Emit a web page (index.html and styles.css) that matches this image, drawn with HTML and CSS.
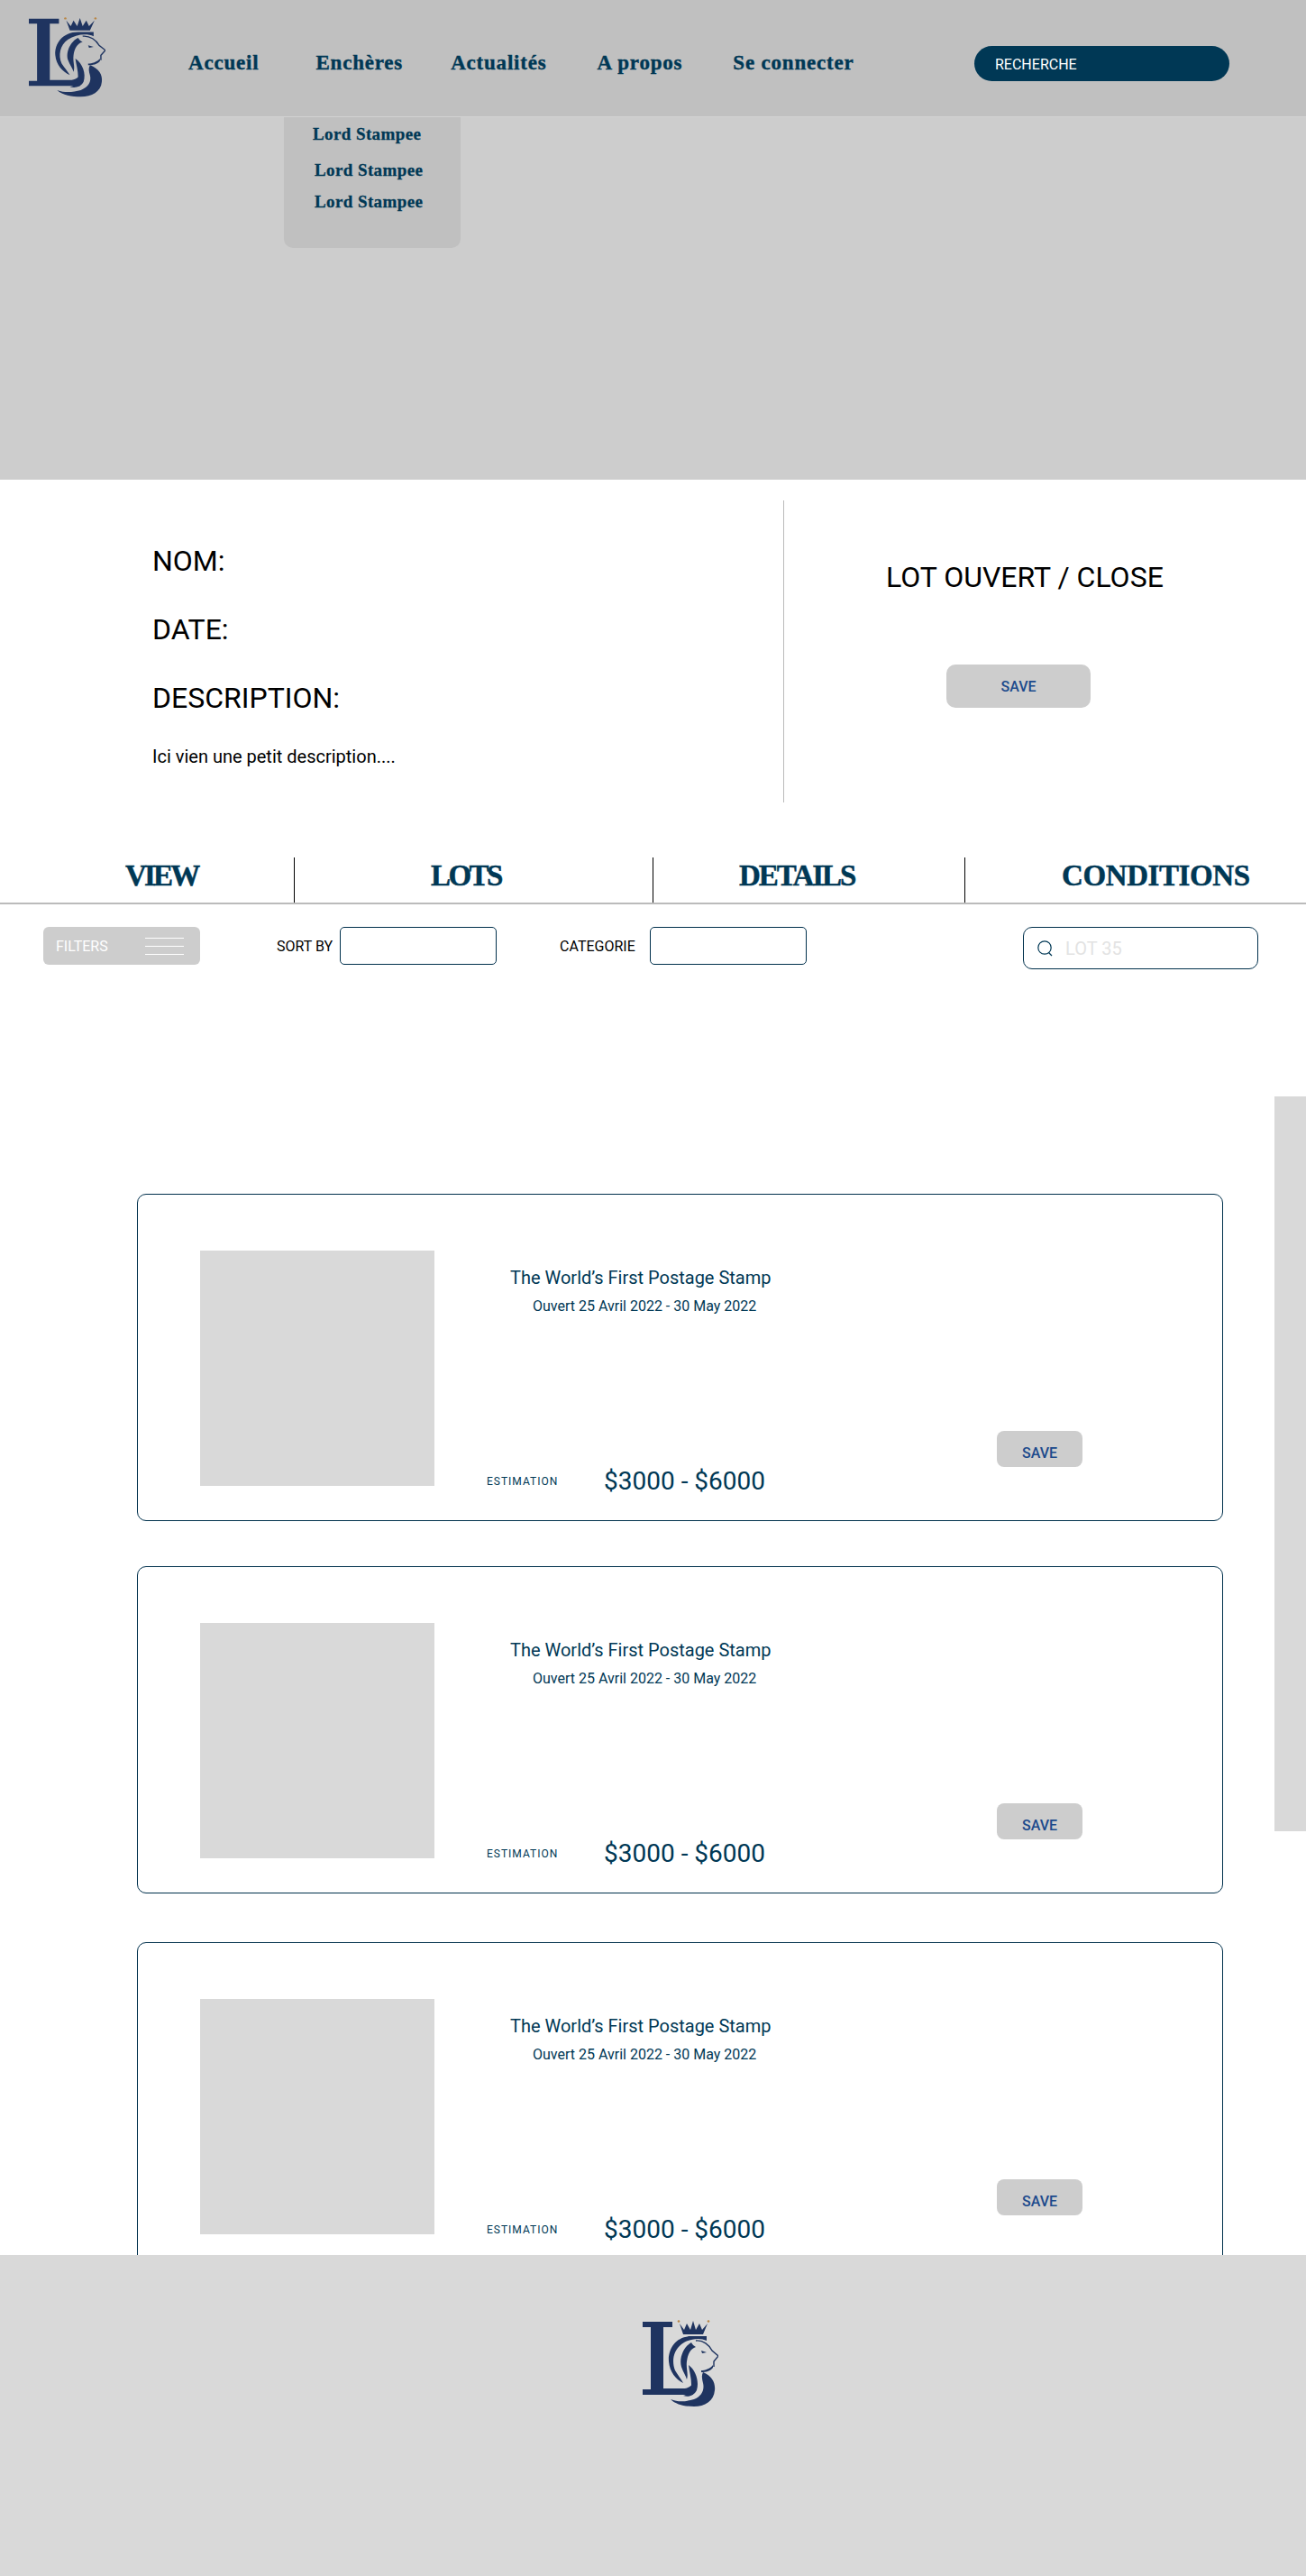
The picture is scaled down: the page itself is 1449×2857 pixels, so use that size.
FILE: index.html
```html
<!DOCTYPE html>
<html lang="en">
<head>
    <meta charset="UTF-8">
    <meta name="viewport" content="width=device-width, initial-scale=1.0">
    <title>Lord Stampee - Enchères</title>
    <link rel="stylesheet" href="styles.css">
</head>
<body>

    <svg class="sprite" width="0" height="0">
        <symbol id="logo" viewBox="0 0 85 99" preserveAspectRatio="none">
            <path d="M1 2H34V8H24V76H46C52 76 55 73 57 70V83H1V77H10V8H1Z"/>
            <path d="M42 4L47 11L50 4L54 11L57 1L60 11L64 4L67 11L73 4L68 16H46Z"/>
            <path d="M72 18V23C64 19 52 21 44 27C35 34 33 46 37 56C40 61 44 66 46 70C38 66 31 58 30 46C29 32 38 18 55 18Z"/>
            <path d="M55 25C47 29 41 42 44 52C46 58 49 62 50 66C52 60 49 54 50 46C51 38 54 32 60 30C58 29 56 27 55 25Z"/>
            <path d="M68 58C78 62 82 70 81 78C80 90 70 96 58 96C48 96 38 94 32 88C42 92 50 90 58 88C66 85 70 78 68 70C67 66 66 62 68 58Z"/>
            <path d="M52 50C60 56 64 68 61 78C58 84 52 86 46 84C52 83 55 78 55 72C55 64 53 58 52 50Z"/>
            <path d="M66 56C70 56 76 54 79 50V53C76 57 71 58 66 58Z"/>
            <path d="M60 23C68 22 75 28 78 34L85 40L80 46L80 52" fill="none" stroke="#1f3460" stroke-width="1.4"/>
            <path d="M66 34L72 36L67 37Z"/>
            <circle cx="41" cy="1.5" r="1.3" fill="#b98646"/>
            <circle cx="74" cy="1.5" r="1.3" fill="#b98646"/>
        </symbol>
    </svg>

    <header class="site-header">
        <svg class="logo"><use href="#logo"></use></svg>
        <nav class="main-nav">
            <a href="#" class="nav-accueil">Accueil</a>
            <a href="#" class="nav-encheres">Enchères</a>
            <a href="#" class="nav-actus">Actualités</a>
            <a href="#" class="nav-apropos">A propos</a>
            <a href="#">Se connecter</a>
        </nav>
        <div class="header-search">RECHERCHE</div>
    </header>

    <section class="hero">
        <ul class="dropdown">
            <li class="first">Lord Stampee</li>
            <li class="second">Lord Stampee</li>
            <li class="third">Lord Stampee</li>
        </ul>
    </section>

    <section class="lot-head">
        <div class="lot-fields">
            <h2>NOM:</h2>
            <h2>DATE:</h2>
            <h2>DESCRIPTION:</h2>
            <p>Ici vien une petit description....</p>
        </div>
        <div class="lot-status">
            <h2>LOT OUVERT / CLOSE</h2>
            <button class="btn btn-big">SAVE</button>
        </div>
    </section>

    <div class="tabs">
        <a href="#" class="tab tab-view">VIEW</a>
        <a href="#" class="tab tab-lots">LOTS</a>
        <a href="#" class="tab tab-details">DETAILS</a>
        <a href="#" class="tab tab-conditions">CONDITIONS</a>
    </div>

    <div class="toolbar">
        <div class="filters">
            <span>FILTERS</span>
            <div class="filter-lines"><i></i><i></i><i></i></div>
        </div>
        <label class="sort-label">SORT BY</label>
        <div class="select-box"></div>
        <label class="cat-label">CATEGORIE</label>
        <div class="select-box"></div>
        <div class="lot-search">
            <svg width="20" height="20" viewBox="0 0 20 20" fill="none" stroke="#003855" stroke-width="1.2">
                <circle cx="9" cy="9" r="7.2"/>
                <path d="M13.5 14.5L17 18"/>
            </svg>
            <span>LOT 35</span>
        </div>
    </div>

    <main class="lots">
        <div class="side-panel"></div>

        <div class="lot-list">
            <article class="lot-card">
                <div class="thumb"></div>
                <div class="lot-body">
                    <h3>The World’s First Postage Stamp</h3>
                    <p class="lot-date">Ouvert 25 Avril 2022 - 30 May 2022</p>
                    <div class="lot-bottom">
                        <span class="est-label">ESTIMATION</span>
                        <span class="est-price">$3000 - $6000</span>
                        <button class="btn btn-small">SAVE</button>
                    </div>
                </div>
            </article>

            <article class="lot-card">
                <div class="thumb"></div>
                <div class="lot-body">
                    <h3>The World’s First Postage Stamp</h3>
                    <p class="lot-date">Ouvert 25 Avril 2022 - 30 May 2022</p>
                    <div class="lot-bottom">
                        <span class="est-label">ESTIMATION</span>
                        <span class="est-price">$3000 - $6000</span>
                        <button class="btn btn-small">SAVE</button>
                    </div>
                </div>
            </article>

            <article class="lot-card">
                <div class="thumb"></div>
                <div class="lot-body">
                    <h3>The World’s First Postage Stamp</h3>
                    <p class="lot-date">Ouvert 25 Avril 2022 - 30 May 2022</p>
                    <div class="lot-bottom">
                        <span class="est-label">ESTIMATION</span>
                        <span class="est-price">$3000 - $6000</span>
                        <button class="btn btn-small">SAVE</button>
                    </div>
                </div>
            </article>
        </div>
    </main>

    <footer class="site-footer">
        <svg class="footer-logo"><use href="#logo"></use></svg>
    </footer>

</body>
</html>
```

FILE: styles.css
```css
body {
    font-family: Roboto, Arial, sans-serif;
    background-color: #fff;
    color: #000;
    margin: 0;
    padding: 0;
}

h2, h3, p, ul {
    margin: 0;
    padding: 0;
}

.sprite {
    position: absolute;
}

/* header */
.site-header {
    height: 129px;
    background-color: #c0c0c0;
    border-bottom: 1px solid #d2d2d2;
    display: flex;
    align-items: flex-start;
    padding-left: 31px;
}

.logo {
    width: 86px;
    height: 91px;
    margin-top: 19px;
    fill: #1f3460;
}

.main-nav {
    display: flex;
    gap: 56px;
    margin-left: 92px;
    margin-top: 55px;
}

.main-nav a {
    font-family: "Liberation Serif", serif;
    font-weight: bold;
    font-size: 23px;
    line-height: 30px;
    letter-spacing: 0.8px;
    -webkit-text-stroke: 0.4px #003855;
    color: #003855;
    text-decoration: none;
}

.nav-accueil {
    margin-right: 7px;
}

.nav-encheres {
    margin-right: -3px;
}

.header-search {
    margin-left: auto;
    margin-right: 85px;
    margin-top: 51px;
    width: 283px;
    height: 39px;
    box-sizing: border-box;
    padding-left: 23px;
    line-height: 41px;
    font-size: 16px;
    color: #fff;
    background-color: #003855;
    border-radius: 20px;
}

/* hero */
.hero {
    height: 402px;
    background-color: #cdcdcd;
    position: relative;
}

.dropdown {
    position: absolute;
    top: 0;
    left: 315px;
    width: 196px;
    height: 145px;
    background-color: #c0c0c0;
    border-radius: 0 0 10px 10px;
    list-style: none;
}

.dropdown li {
    position: absolute;
    left: 34px;
    font-family: "Liberation Serif", serif;
    font-weight: bold;
    font-size: 19px;
    line-height: 24px;
    letter-spacing: 0.4px;
    -webkit-text-stroke: 0.3px #003855;
    color: #003855;
}

.dropdown .first {
    left: 32px;
    top: 7px;
}

.dropdown .second {
    top: 47px;
}

.dropdown .third {
    top: 82px;
}

/* lot head */
.lot-head {
    display: flex;
    height: 418px;
    padding-top: 23px;
    box-sizing: border-box;
}

.lot-fields {
    width: 870px;
    height: 335px;
    box-sizing: border-box;
    padding: 48px 0 0 169px;
    border-right: 1px solid #bbb;
}

.lot-fields h2 {
    font-weight: 400;
    font-size: 32px;
    line-height: 38px;
    margin-bottom: 38px;
}

.lot-fields p {
    font-size: 20px;
    line-height: 26px;
    margin-top: -5px;
}

.lot-status {
    flex: 1;
    padding-left: 113px;
}

.lot-status h2 {
    font-weight: 400;
    font-size: 32px;
    line-height: 38px;
    margin: 66px 0 78px;
}

.btn {
    display: block;
    background-color: #cdcdcd;
    color: #1c4a8c;
    font-family: Roboto, Arial, sans-serif;
    font-weight: 500;
    font-size: 16px;
    border: none;
    cursor: pointer;
}

.btn-big {
    width: 160px;
    height: 48px;
    margin-left: 67px;
    border-radius: 10px;
}

.btn-small {
    width: 95px;
    height: 40px;
    margin-left: auto;
    margin-bottom: 72px;
    margin-right: 155px;
    padding-top: 9px;
    border-radius: 8px;
}

/* tabs */
.tabs {
    display: flex;
    height: 50px;
    margin-top: 1px;
    border-bottom: 2px solid #bbb;
}

.tab {
    font-family: "Liberation Serif", serif;
    font-weight: bold;
    font-size: 33px;
    line-height: 40px;
    -webkit-text-stroke: 0.5px #003855;
    color: #003855;
    text-decoration: none;
    box-sizing: border-box;
    border-right: 1px solid #000;
}

.tab-view {
    width: 327px;
    padding-left: 139px;
    letter-spacing: -2.8px;
}

.tab-lots {
    width: 398px;
    padding-left: 151px;
    letter-spacing: -2.6px;
}

.tab-details {
    width: 346px;
    padding-left: 95px;
    letter-spacing: -2px;
}

.tab-conditions {
    flex: 1;
    padding-left: 107px;
    border-right: none;
    letter-spacing: -0.4px;
}

/* toolbar */
.toolbar {
    display: flex;
    align-items: flex-start;
    padding: 25px 53px 0 48px;
    height: 321px;
    box-sizing: border-box;
}

.filters {
    width: 174px;
    height: 42px;
    box-sizing: border-box;
    padding: 0 18px 0 14px;
    display: flex;
    align-items: center;
    justify-content: space-between;
    background-color: #cdcdcd;
    border-radius: 6px;
    color: #fff;
    font-size: 16px;
}

.filter-lines {
    width: 43px;
}

.filter-lines i {
    display: block;
    height: 1px;
    background-color: #fff;
    margin: 8px 0;
}

.sort-label, .cat-label {
    font-size: 16px;
    line-height: 44px;
    margin-right: 8px;
}

.sort-label {
    margin-left: 85px;
}

.cat-label {
    margin-left: 70px;
    margin-right: 16px;
}

.select-box {
    width: 174px;
    height: 42px;
    box-sizing: border-box;
    border: 1px solid #00304c;
    border-radius: 5px;
}

.lot-search {
    margin-left: auto;
    width: 261px;
    height: 47px;
    box-sizing: border-box;
    border: 1px solid #00304c;
    border-radius: 10px;
    padding-left: 14px;
    display: flex;
    align-items: center;
    gap: 12px;
    color: #e3e3e3;
    font-size: 20px;
}

/* lots */
.lots {
    position: relative;
}

.lot-list {
    height: 1177px;
    overflow: hidden;
}

.side-panel {
    position: absolute;
    top: -108px;
    right: 0;
    width: 35px;
    height: 815px;
    background-color: #d9d9d9;
}

.lot-card {
    display: flex;
    width: 1205px;
    height: 363px;
    box-sizing: border-box;
    margin: 0 0 50px 152px;
    padding: 62px 0 0 69px;
    border: 1px solid #00304c;
    border-radius: 10px;
}

.lot-card:nth-of-type(2) {
    margin-bottom: 54px;
}

.thumb {
    width: 260px;
    height: 261px;
    background-color: #d9d9d9;
}

.lot-body {
    flex: 1;
    height: 312px;
    display: flex;
    flex-direction: column;
    color: #003855;
}

.lot-body h3 {
    font-weight: 400;
    font-size: 20px;
    line-height: 28px;
    margin: 16px 0 0 84px;
}

.lot-date {
    font-size: 16px;
    line-height: 22px;
    margin: 7px 0 0 109px;
}

.lot-bottom {
    margin-top: auto;
    display: flex;
    align-items: center;
    padding-left: 58px;
}

.est-label {
    font-size: 12px;
    letter-spacing: 1px;
    width: 130px;
}

.est-price {
    font-size: 28px;
    line-height: 40px;
}

/* footer */
.site-footer {
    height: 356px;
    background-color: #d9d9d9;
    display: flex;
    justify-content: center;
    align-items: flex-start;
}

.footer-logo {
    width: 85px;
    height: 99px;
    margin-top: 72px;
    margin-left: 60px;
    fill: #1f3460;
}
```
